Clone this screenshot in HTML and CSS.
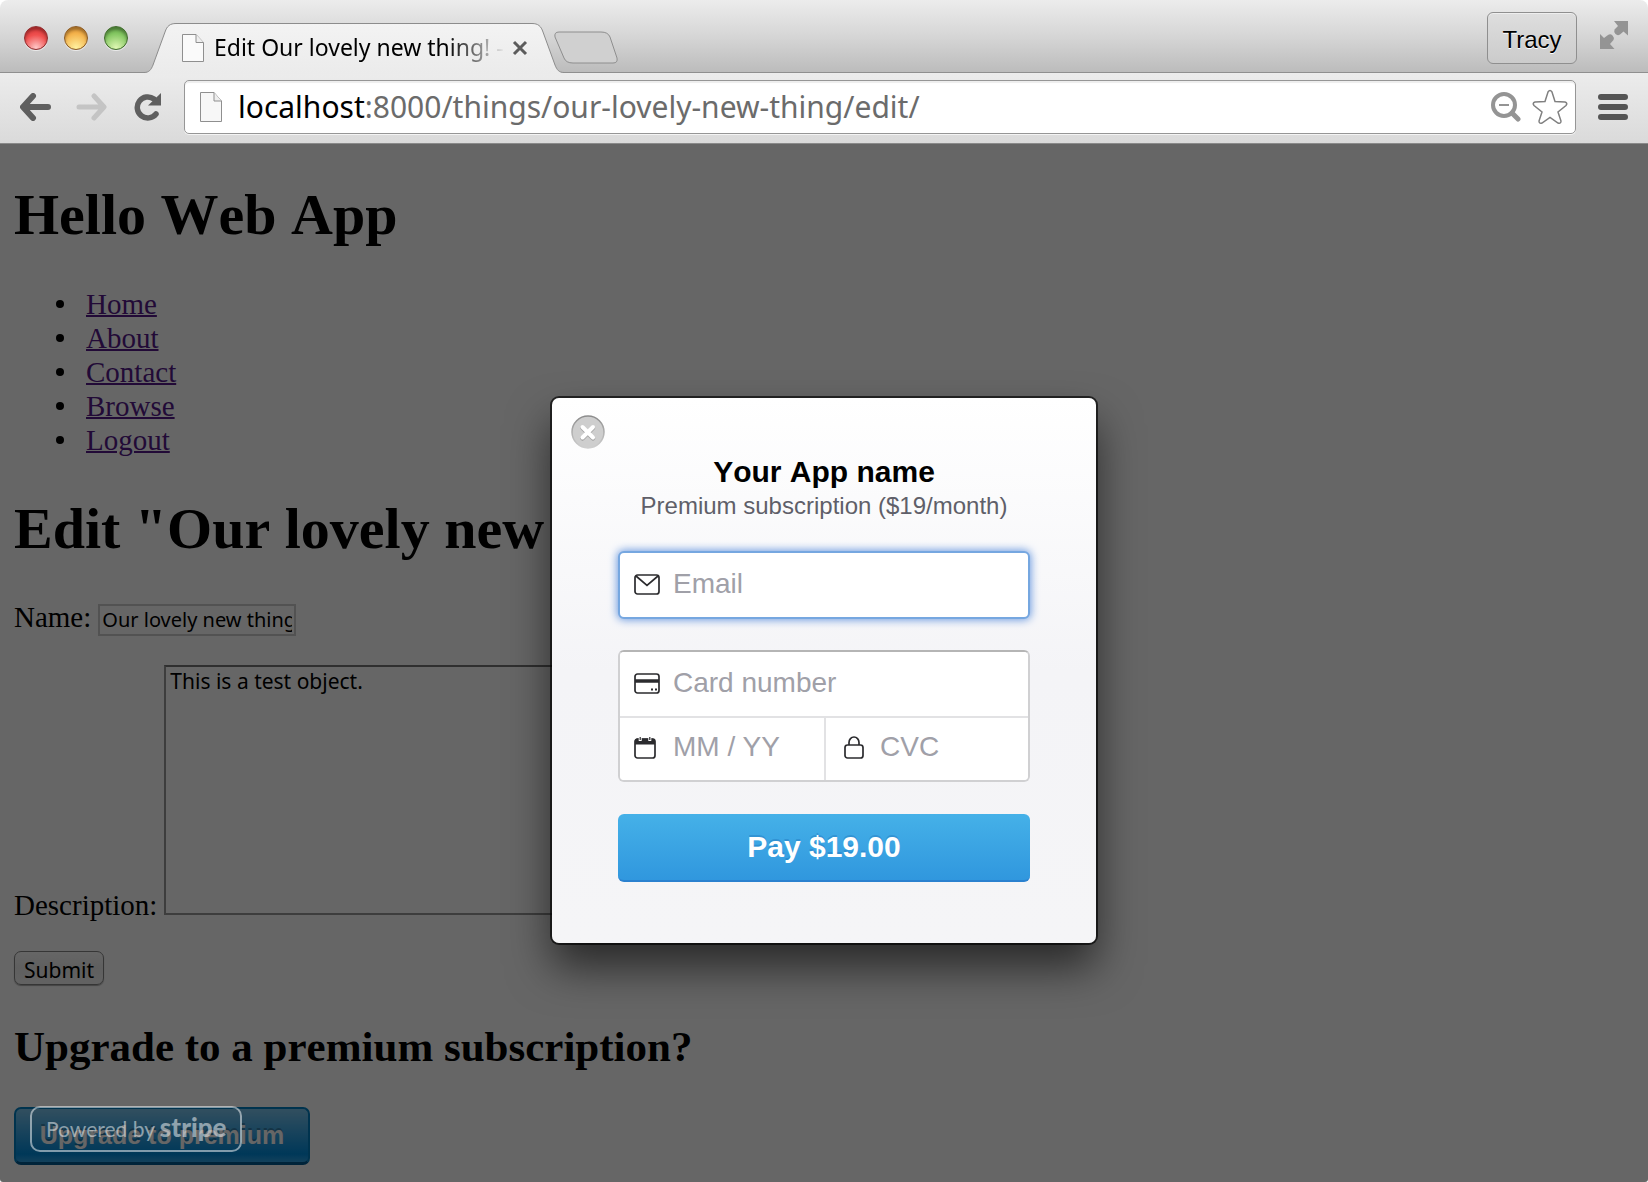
FILE: index.html
```html
<!DOCTYPE html>
<html lang="en">
<head>
<meta charset="utf-8">
<title>Edit Our lovely new thing! - Hello Web App</title>
<link rel="stylesheet" href="styles.css">
</head>
<body>
<div class="window">
  <header class="titlebar">
    <div class="lights">
      <span class="light light-red"></span>
      <span class="light light-yellow"></span>
      <span class="light light-green"></span>
    </div>
    <div class="tab">
      <svg class="tab-shape" width="420" height="51" viewBox="0 0 420 51" aria-hidden="true">
        <defs><linearGradient id="tabfill" x1="0" y1="0" x2="0" y2="1"><stop offset="0" stop-color="#f3f3f3"/><stop offset="1" stop-color="#ebebeb"/></linearGradient></defs>
        <path d="M0 51V49.500C5 49.500 7 47 9 42L21 9C23 3 26 .5 32 .5H388C394 .5 397 3 399 9L411 42C413 47 415 49.500 420 49.500V51Z" fill="url(#tabfill)"/>
        <path d="M0 49.500C5 49.500 7 47 9 42L21 9C23 3 26 .5 32 .5H388C394 .5 397 3 399 9L411 42C413 47 415 49.500 420 49.500" fill="none" stroke="#8c8c8c"/>
      </svg>
      <svg class="page-icon" width="22" height="28" viewBox="0 0 22 28" aria-hidden="true"><path d="M.5 .5H14L21.500 8.500V27.500H.5Z" fill="#fafafa" stroke="#8f8f8f"/><path d="M14 .5V8.500H21.500" fill="#eee" stroke="#8f8f8f"/></svg>
      <span class="tab-title">Edit Our lovely new thing! -</span>
      <button class="tab-close" aria-label="Close tab"><svg width="16" height="16" viewBox="0 0 16 16"><path d="M2 2L14 14M14 2L2 14" stroke="#5c5c5c" stroke-width="3"/></svg></button>
    </div>
    <button class="new-tab" aria-label="New tab"><svg width="66" height="34" viewBox="0 0 66 34"><path d="M6 1H48Q55 1 57 6L64 27Q65 32 60 32H20Q13 32 11 27L2 6Q1 1 6 1Z" fill="#d0d0d0" stroke="#8e8e8e"/></svg></button>
    <div class="title-right">
      <button class="profile">Tracy</button>
      <button class="icon-button" aria-label="Full screen"><svg width="28" height="28" viewBox="0 0 28 28"><path d="M14 0H28V14.500L23.500 10.500L20 13.500Q17.500 15 15.500 13Q13.500 11 14.500 8.500L18 5ZM0 13L4 17L8 14Q10.500 12.500 12.500 14.500Q14.500 16.500 13.500 19L10 23L14.500 28H0Z" fill="#949494"/></svg></button>
    </div>
  </header>

  <nav class="toolbar" aria-label="Browser toolbar">
    <div class="nav-buttons">
      <button class="icon-button" aria-label="Back"><svg width="32" height="28" viewBox="0 0 32 28"><path d="M13 3L3 14L13 25M4 14H28" fill="none" stroke="#5f5f5f" stroke-width="6" stroke-linecap="round" stroke-linejoin="round"/></svg></button>
      <button class="icon-button" aria-label="Forward" disabled><svg width="32" height="28" viewBox="0 0 32 28"><path d="M18 3L28 14L18 25M27 14H3" fill="none" stroke="#c4c4c4" stroke-width="5" stroke-linecap="round" stroke-linejoin="round"/></svg></button>
      <button class="icon-button" aria-label="Reload"><svg width="30" height="28" viewBox="-2 0 30 28"><path d="M22 21A10.500 10.500 0 1 1 20 6" fill="none" stroke="#5f5f5f" stroke-width="5.500" stroke-linecap="round"/><path d="M27 0V12.500H14Z" fill="#5f5f5f"/></svg></button>
    </div>
    <div class="omnibox">
      <svg class="page-icon" width="22" height="30" viewBox="0 0 22 30" aria-hidden="true"><path d="M.5 .5H14L21.500 9V29.500H.5Z" fill="#f7f7f7" stroke="#8f8f8f"/><path d="M14 .5V9H21.500" fill="#eee" stroke="#8f8f8f"/></svg>
      <div class="url"><span class="host">localhost</span>:8000/things/our-lovely-new-thing/edit/</div>
      <button class="icon-button" aria-label="Zoom"><svg width="30" height="30" viewBox="0 0 30 30"><circle cx="13" cy="13" r="11" fill="none" stroke="#949494" stroke-width="4"/><path d="M8 13H18" stroke="#949494" stroke-width="2"/><path d="M21 21L27 27" stroke="#949494" stroke-width="5" stroke-linecap="round"/></svg></button>
      <button class="icon-button" aria-label="Bookmark"><svg width="36" height="36" viewBox="0 0 36 36"><path d="M16 3Q18 0 20 3L23 12.500L33 13Q36 14 34 16.500L26 23L29 32Q29 35 26 34L18 28.500L10 34Q7 35 7 32L10 23L2 16.500Q0 14 3 13L13 12.500Z" fill="#fff" stroke="#808080" stroke-width="1.500"/></svg></button>
    </div>
    <button class="icon-button" aria-label="Menu"><svg width="30" height="26" viewBox="0 0 30 26"><path d="M3 3H27M3 13H27M3 23H27" stroke="#545454" stroke-width="6" stroke-linecap="round"/></svg></button>
  </nav>

  <div class="viewport">
    <main class="page">
      <h1>Hello Web App</h1>
      <ul>
        <li><a href="#">Home</a></li>
        <li><a href="#">About</a></li>
        <li><a href="#">Contact</a></li>
        <li><a href="#">Browse</a></li>
        <li><a href="#">Logout</a></li>
      </ul>
      <h1>Edit "Our lovely new thing!"</h1>
      <form>
        <div class="field">
          <label for="name">Name:</label>
          <input class="name-input" id="name" type="text" value="Our lovely new thing!">
        </div>
        <div class="field field-area">
          <label for="description">Description:</label>
          <textarea id="description">This is a test object.</textarea>
        </div>
        <button class="submit" type="button">Submit</button>
      </form>
      <h2>Upgrade to a premium subscription?</h2>
      <button class="upgrade">Upgrade to premium</button>
    </main>

    <div class="overlay">
      <form class="dialog" role="dialog" aria-labelledby="dialog-title">
        <button class="dialog-close" type="button" aria-label="Close"><svg width="34" height="34" viewBox="0 0 34 34"><defs><linearGradient id="closering" x1="0" y1="0" x2="0" y2="1"><stop offset="0" stop-color="#8c8c8c"/><stop offset="1" stop-color="#cfcfcf"/></linearGradient></defs><circle cx="17" cy="17" r="16" fill="#cecece" stroke="url(#closering)" stroke-width="1.500"/><path d="M11.500 13L22 23.500M22 13L11.500 23.500" stroke="#a6a6a6" stroke-width="4.500" stroke-linecap="round"/><path d="M11.500 12L22 22.500M22 12L11.500 22.500" stroke="#fff" stroke-width="4" stroke-linecap="round"/></svg></button>
        <h3 id="dialog-title">Your App name</h3>
        <p class="plan">Premium subscription ($19/month)</p>
        <label class="box box-focus">
          <svg width="26" height="22" viewBox="0 0 26 22" aria-hidden="true"><rect x="1" y="1" width="24" height="19" rx="2.500" fill="none" stroke="#2b2b2e" stroke-width="1.700"/><path d="M2 2L13 11.500L24 2" fill="none" stroke="#2b2b2e" stroke-width="1.700"/></svg>
          <input type="email" placeholder="Email" aria-label="Email">
        </label>
        <div class="card">
          <label class="box box-card">
            <svg width="26" height="22" viewBox="0 0 26 22" aria-hidden="true"><rect x="1" y="1" width="24" height="19" rx="2.500" fill="none" stroke="#2b2b2e" stroke-width="1.700"/><path d="M1 8H25" stroke="#2b2b2e" stroke-width="3.500"/><path d="M17 16.500H19M21 16.500H23" stroke="#2b2b2e" stroke-width="2"/></svg>
            <input type="text" placeholder="Card number" aria-label="Card number">
          </label>
          <label class="box box-date">
            <svg width="26" height="24" viewBox="0 0 26 24" aria-hidden="true"><rect x="1" y="3" width="20" height="19" rx="2.500" fill="none" stroke="#2b2b2e" stroke-width="1.700"/><path d="M1 8.500V5Q1 2.500 3 2.500H19Q21 2.500 21 5V8.500Z" fill="#2b2b2e"/><path d="M6.200 0V5M15.800 0V5" stroke="#fff" stroke-width="3"/><path d="M6.200 1V4M15.800 1V4" stroke="#2b2b2e" stroke-width="1.200"/></svg>
            <input type="text" placeholder="MM / YY" aria-label="Expiry date">
          </label>
          <label class="box box-cvc">
            <svg width="26" height="24" viewBox="0 0 26 24" aria-hidden="true"><rect x="1" y="9" width="18" height="13" rx="2.500" fill="none" stroke="#2b2b2e" stroke-width="1.700"/><path d="M5 9V6.500A5 5.500 0 0 1 15 6.500V9" fill="none" stroke="#2b2b2e" stroke-width="1.700"/></svg>
            <input type="text" placeholder="CVC" aria-label="CVC">
          </label>
        </div>
        <button class="pay" type="button">Pay $19.00</button>
      </form>
      <a class="powered" href="#">Powered by <strong>stripe</strong></a>
    </div>
  </div>
</div>
</body>
</html>
```
FILE: styles.css
```css
* { box-sizing: border-box; }

body {
  margin: 0;
  background: #fff;
  font-family: "Liberation Serif", serif;
}

button {
  margin: 0;
  padding: 0;
  border: 0;
  background: none;
  font-family: "Liberation Sans", sans-serif;
}

svg { display: block; flex: none; }

.window {
  display: flex;
  flex-direction: column;
  height: 100vh;
  overflow: hidden;
  border-radius: 8px 8px 3px 3px;
}

/* Browser chrome */

.titlebar {
  display: flex;
  align-items: flex-end;
  height: 73px;
  padding-left: 24px;
  border-bottom: 1px solid #8f8f8f;
  background: linear-gradient(#ececec, #d6d6d6 50%, #bcbcbc);
}

.lights {
  display: flex;
  gap: 16px;
  margin-right: 16px;
  padding-bottom: 22px;
}

.light {
  width: 24px;
  height: 24px;
  border: 1px solid #7a4a3c;
  border-radius: 50%;
  box-shadow: inset 0 3px 3px rgba(0, 0, 0, .3), 0 1px 0 rgba(255, 255, 255, .6);
}

.light-red { background: radial-gradient(circle at 50% 95%, #ffc9c9, #f0504f 55%, #d42e30); border-color: #8e2c2e; }
.light-yellow { background: radial-gradient(circle at 50% 95%, #fff2a0, #f4b34c 60%, #d98a2c); border-color: #8a5a24; }
.light-green { background: radial-gradient(circle at 50% 95%, #e0f8b4, #84c762 60%, #579c3e); border-color: #3f6a2c; }

.tab {
  position: relative;
  display: flex;
  align-items: center;
  width: 420px;
  height: 50px;
  margin-bottom: -1px;
  padding: 0 36px 0 38px;
}

.tab-shape { position: absolute; left: 0; top: 0; }

.tab .page-icon, .tab-close { position: relative; }

.tab-title {
  position: relative;
  flex: 1;
  margin-left: 10px;
  padding-bottom: 2px;
  white-space: nowrap;
  font: 23px/30px "Noto Sans", sans-serif;
  color: #000;
  -webkit-mask-image: linear-gradient(90deg, #000 78%, transparent 98%);
  mask-image: linear-gradient(90deg, #000 78%, transparent 98%);
}

.new-tab { margin: 0 0 7px -11px; }

.title-right {
  display: flex;
  align-items: center;
  gap: 23px;
  margin-left: auto;
  padding: 0 20px 8px 0;
}

.profile {
  width: 90px;
  height: 52px;
  padding-top: 3px;
  border: 1px solid #8f8f8f;
  border-radius: 6px;
  background: linear-gradient(#dedede, #cbcbcb);
  box-shadow: inset 0 1px 0 #eee;
  font-size: 24px;
  color: #000;
  text-shadow: 0 1px 0 #fff;
}

.title-right .icon-button { margin-bottom: 6px; }

.toolbar {
  display: flex;
  align-items: center;
  gap: 22px;
  height: 71px;
  padding: 0 20px 2px;
  border-bottom: 1px solid #8a8a8a;
  background: linear-gradient(#ececec, #dadada);
}

.nav-buttons { display: flex; gap: 24px; }

.omnibox {
  display: flex;
  flex: 1;
  align-items: center;
  gap: 11px;
  height: 54px;
  padding: 0 7px 0 15px;
  border: 1px solid #969696;
  border-radius: 5px;
  background: #fff;
  box-shadow: inset 0 2px 1px #eee, 0 1px 0 #f4f4f4;
}

.url {
  flex: 1;
  padding-left: 5px;
  font: 30px/40px "Noto Sans", sans-serif;
  color: #6b6b6b;
}

.host { color: #000; }

/* Web page */

.viewport {
  position: relative;
  flex: 1;
  min-height: 0;
  overflow: hidden;
}

.page {
  padding: 0 14px;
  font-size: 29px;
  line-height: 34px;
}

h1, h2, h3 { font-kerning: none; }
h1 { margin: 38px 0; font-size: 58px; line-height: 66px; }
h2 { margin: 37px 0 35px; font-size: 43px; line-height: 50px; }
ul { margin: 39px 0; padding-left: 42px; list-style: none; }
li { display: flex; align-items: center; gap: 22px; }

li::before {
  content: "";
  width: 8px;
  height: 8px;
  border-radius: 50%;
  background: #000;
}

a { color: #551a8b; text-decoration-thickness: 2px; }

.field { display: flex; align-items: baseline; gap: 7px; }
.field-area { align-items: flex-end; margin-top: 29px; }

.name-input {
  width: 198px;
  height: 32px;
  padding: 0 2px;
  border: 2px solid #ccc;
  background: #fff;
  font: 20px/28px "Noto Sans", sans-serif;
  color: #000;
}

textarea {
  width: 540px;
  height: 250px;
  margin-bottom: 7px;
  padding: 1px 4px;
  border: 2px solid #999;
  border-top-color: #777;
  background: #fff;
  font: 21px/26px "Noto Sans", sans-serif;
  color: #000;
  resize: none;
}

.submit {
  display: block;
  width: 90px;
  height: 34px;
  margin-top: 29px;
  padding-top: 3px;
  border: 1px solid #888;
  border-radius: 7px;
  background: linear-gradient(#fff, #eee 50%, #f6f6f6);
  box-shadow: 0 1px 1px #aaa;
  font: 21px/30px "Noto Sans", sans-serif;
  color: #000;
}

.upgrade {
  width: 296px;
  height: 58px;
  border: 2px solid #0080c4;
  border-bottom: 3px solid #005a92;
  border-radius: 7px;
  background: linear-gradient(#7dc5ee, #008cdd 85%, #30a2e4);
  font-size: 25px;
  font-weight: bold;
  font-kerning: none;
  color: #fff;
  text-shadow: 0 -2px 0 rgba(0, 0, 0, .25);
}

/* Checkout */

.overlay {
  position: absolute;
  inset: 0;
  display: flex;
  align-items: center;
  justify-content: center;
  padding-top: 15px;
  background: rgba(0, 0, 0, .6);
}

.dialog {
  position: relative;
  width: 544px;
  padding: 56px 66px 61px;
  border-radius: 7px;
  background: linear-gradient(#fff, #f4f4f7 50%, #f5f5f7);
  box-shadow: 0 0 0 2px rgba(0, 0, 0, .65), 0 24px 44px rgba(0, 0, 0, .6);
  font-family: "Liberation Sans", sans-serif;
}

.dialog-close { position: absolute; left: 19px; top: 17px; }

h3 {
  margin: 0;
  font-size: 30px;
  line-height: 36px;
  text-align: center;
  color: #000;
}

.plan {
  margin: 0 0 29px;
  font-size: 24px;
  line-height: 32px;
  text-align: center;
  color: #5f5f69;
}

.box {
  display: flex;
  align-items: center;
  gap: 13px;
  height: 68px;
  padding: 0 14px;
  background: #fff;
}

.box input {
  flex: 1;
  width: 100%;
  min-width: 0;
  height: 40px;
  padding: 0 0 2px;
  border: 0;
  outline: 0;
  background: none;
  font: 28px/38px "Liberation Sans", sans-serif;
  color: #333;
}

.box input::placeholder { color: #a0a0a8; opacity: 1; }

.box-focus {
  border: 2px solid #76a7e0;
  border-radius: 6px;
  box-shadow: 0 0 9px 1px #6d9be0;
}

.card {
  display: grid;
  grid-template-columns: 51fr 50fr;
  margin: 31px 0 32px;
  overflow: hidden;
  border: 2px solid #d0d0d2;
  border-top-color: #b5b5b5;
  border-radius: 6px;
}

.box-card { grid-column: 1 / -1; height: 66px; border-bottom: 2px solid #e2e2e4; }
.box-date, .box-cvc { height: 62px; padding-bottom: 2px; }
.box-date { border-right: 2px solid #e2e2e4; }
.box-cvc { padding-left: 18px; gap: 10px; }

.pay {
  display: block;
  width: 100%;
  height: 68px;
  border-bottom: 2px solid #2a81cf;
  border-radius: 6px;
  background: linear-gradient(#45b1e8, #3097de);
  font-size: 30px;
  font-weight: bold;
  font-kerning: none;
  color: #fff;
  text-shadow: 0 -2px 0 rgba(0, 60, 140, .2);
}

.powered {
  position: absolute;
  left: 30px;
  bottom: 30px;
  width: 212px;
  height: 46px;
  padding-left: 14px;
  border: 2px solid rgba(255, 255, 255, .5);
  border-radius: 10px;
  font: 21px/38px Lato, sans-serif;
  color: rgba(255, 255, 255, .5);
  text-decoration: none;
  white-space: nowrap;
}

.powered strong { font-size: 26px; font-weight: 900; }
```
